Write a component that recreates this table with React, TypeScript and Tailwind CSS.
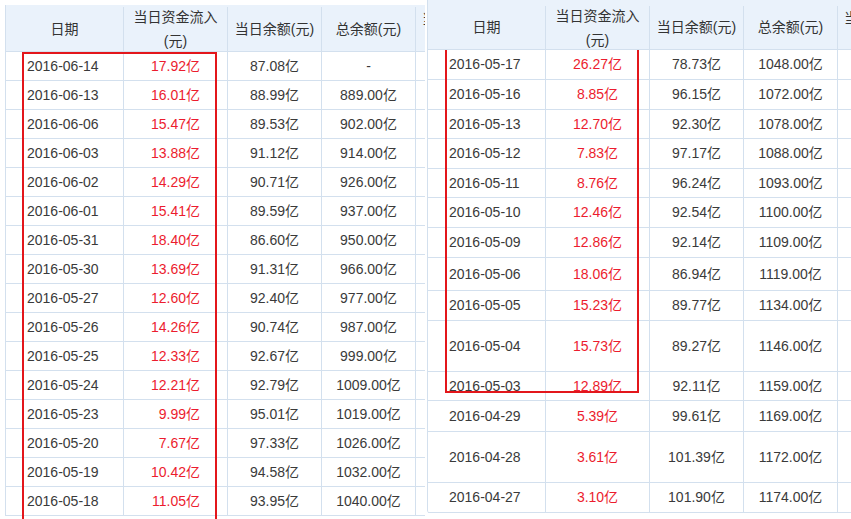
const leftRows = [
  ["2016-06-14", "17.92亿", "87.08亿", "-"],
  ["2016-06-13", "16.01亿", "88.99亿", "889.00亿"],
  ["2016-06-06", "15.47亿", "89.53亿", "902.00亿"],
  ["2016-06-03", "13.88亿", "91.12亿", "914.00亿"],
  ["2016-06-02", "14.29亿", "90.71亿", "926.00亿"],
  ["2016-06-01", "15.41亿", "89.59亿", "937.00亿"],
  ["2016-05-31", "18.40亿", "86.60亿", "950.00亿"],
  ["2016-05-30", "13.69亿", "91.31亿", "966.00亿"],
  ["2016-05-27", "12.60亿", "92.40亿", "977.00亿"],
  ["2016-05-26", "14.26亿", "90.74亿", "987.00亿"],
  ["2016-05-25", "12.33亿", "92.67亿", "999.00亿"],
  ["2016-05-24", "12.21亿", "92.79亿", "1009.00亿"],
  ["2016-05-23", "9.99亿", "95.01亿", "1019.00亿"],
  ["2016-05-20", "7.67亿", "97.33亿", "1026.00亿"],
  ["2016-05-19", "10.42亿", "94.58亿", "1032.00亿"],
  ["2016-05-18", "11.05亿", "93.95亿", "1040.00亿"],
];

// [date, inflow, day balance, total, row height]
const rightRows: [string, string, string, string, number][] = [
  ["2016-05-17", "26.27亿", "78.73亿", "1048.00亿", 30],
  ["2016-05-16", "8.85亿", "96.15亿", "1072.00亿", 30],
  ["2016-05-13", "12.70亿", "92.30亿", "1078.00亿", 29],
  ["2016-05-12", "7.83亿", "97.17亿", "1088.00亿", 30],
  ["2016-05-11", "8.76亿", "96.24亿", "1093.00亿", 29],
  ["2016-05-10", "12.46亿", "92.54亿", "1100.00亿", 30],
  ["2016-05-09", "12.86亿", "92.14亿", "1109.00亿", 30],
  ["2016-05-06", "18.06亿", "86.94亿", "1119.00亿", 33],
  ["2016-05-05", "15.23亿", "89.77亿", "1134.00亿", 30],
  ["2016-05-04", "15.73亿", "89.27亿", "1146.00亿", 51],
  ["2016-05-03", "12.89亿", "92.11亿", "1159.00亿", 29],
  ["2016-04-29", "5.39亿", "99.61亿", "1169.00亿", 31],
  ["2016-04-28", "3.61亿", "101.39亿", "1172.00亿", 51],
  ["2016-04-27", "3.10亿", "101.90亿", "1174.00亿", 30],
];

const cell = "border-r border-[#d3e0ee] flex items-center shrink-0";

const Header = ({ h, pt }: { h: string; pt: string }) => (
  <div className={`flex ${h} ${pt} bg-[#eaf2fb] border-b border-[#d3e0ee] text-[#333]`}>
    <div className={`${cell} w-[118px] justify-center`}>日期</div>
    <div className={`${cell} w-[104px] flex-col justify-center leading-[24px]`}>
      <span>当日资金流入</span>
      <span>(元)</span>
    </div>
    <div className={`${cell} w-[94px] justify-center`}>当日余额(元)</div>
    <div className={`${cell} w-[94px] justify-center`}>总余额(元)</div>
    {/* next column, mostly cut off by the screenshot edge */}
    <div className={`${cell} w-[120px] flex-col items-start justify-center pl-[6px] leading-[24px]`}>
      <span>当日</span>
      <span className="h-[24px]" />
    </div>
  </div>
);

const Row = ({ r, h, redAlign }: { r: string[]; h: number; redAlign: string }) => (
  <div className="flex border-b border-[#d3e0ee] text-[#3a3a3a]" style={{ height: h }}>
    <div className={`${cell} w-[118px] pl-[21px]`}>{r[0]}</div>
    <div className={`${cell} w-[104px] text-[#ec1c2e] ${redAlign}`}>{r[1]}</div>
    <div className={`${cell} w-[94px] justify-center`}>{r[2]}</div>
    <div className={`${cell} w-[94px] justify-center`}>{r[3]}</div>
    <div className={`${cell} w-[120px]`} />
  </div>
);

export default function App() {
  return (
    <div
      className="w-[851px] h-[519px] bg-white flex overflow-hidden text-[14px]"
      style={{ fontFamily: '"Liberation Sans", "Noto Sans CJK SC", sans-serif' }}
    >
      {/* left screenshot */}
      <div className="relative w-[425px] h-[519px] overflow-hidden pt-[5px] pl-[5px] shrink-0">
        <div className="border-l border-[#d3e0ee] w-[540px]">
          <Header h="h-[47px]" pt="pt-[2px]" />
          {leftRows.map((r) => (
            <Row key={r[0]} r={r} h={29} redAlign="justify-end pr-[27px]" />
          ))}
        </div>
        <div className="absolute left-[22px] top-[52px] w-[195px] h-[480px] border-2 border-[#e3161b]" />
      </div>

      {/* right screenshot */}
      <div className="relative w-[426px] h-[519px] overflow-hidden pl-[2px] shrink-0">
        <div className="border-l border-[#d3e0ee] rounded-bl-[3px] w-[540px]">
          <div className="relative z-10">
            <Header h="h-[50px]" pt="pt-[6px]" />
          </div>
          {rightRows.map((r) => (
            <Row key={r[0]} r={r} h={r[4]} redAlign="justify-center" />
          ))}
        </div>
        <div className="absolute left-[20px] top-[50px] w-[194px] h-[343px] border-2 border-t-0 border-[#e3161b]" />
      </div>
    </div>
  );
}
